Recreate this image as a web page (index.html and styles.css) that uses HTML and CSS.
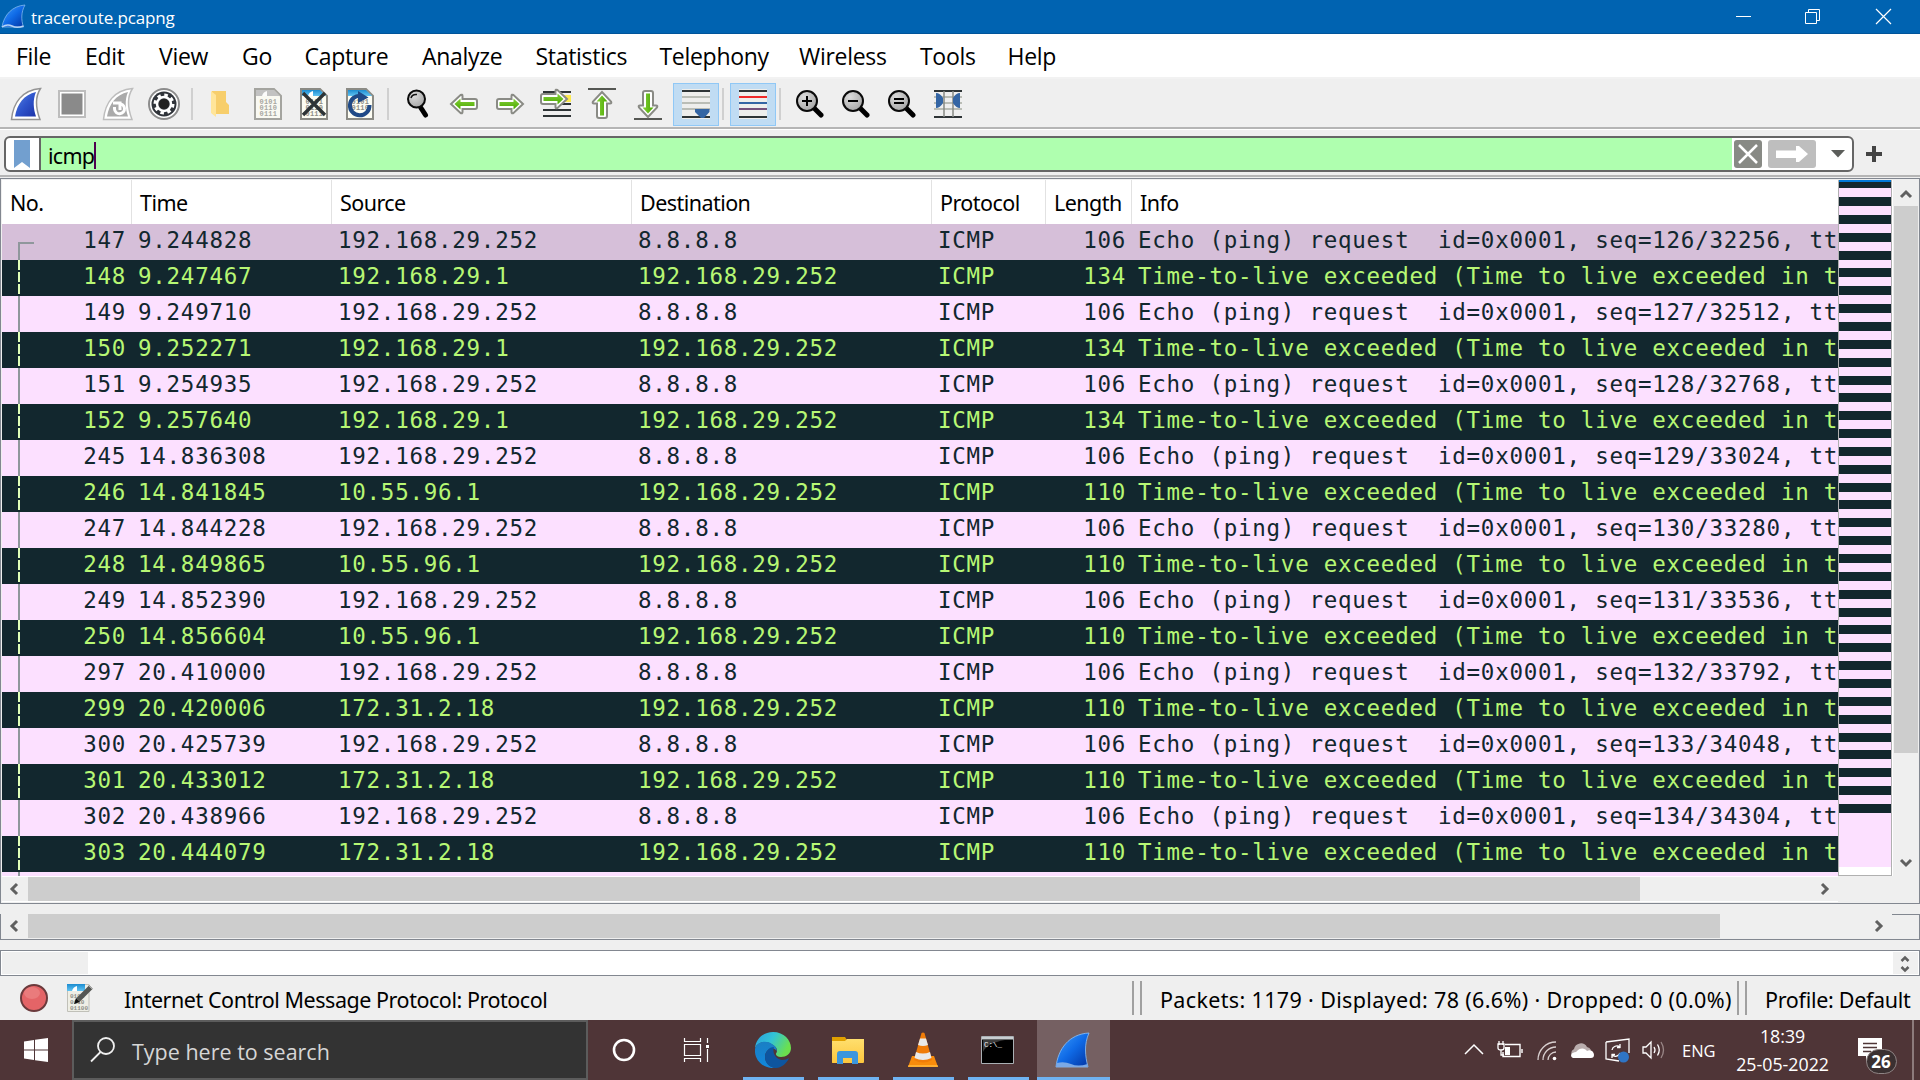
FILE: index.html
```html
<!DOCTYPE html>
<html lang="en">
<head>
<meta charset="utf-8">
<title>traceroute.pcapng</title>
<link rel="stylesheet" href="styles.css">
</head>
<body>
<svg class="defs" width="0" height="0">
  <defs>
    <linearGradient id="fin" x1="0" y1="0" x2="1" y2="1"><stop offset="0" stop-color="#5b86e0"/><stop offset=".5" stop-color="#2f55cc"/><stop offset="1" stop-color="#1d33a8"/></linearGradient>
    <linearGradient id="finBright" x1="0" y1="0" x2="1" y2="1"><stop offset="0" stop-color="#3fa0ff"/><stop offset=".5" stop-color="#0f6ae6"/><stop offset="1" stop-color="#0232a0"/></linearGradient>
    <linearGradient id="green" x1="0" y1="0" x2="0" y2="1"><stop offset="0" stop-color="#85d13a"/><stop offset="1" stop-color="#4ba800"/></linearGradient>
    <linearGradient id="sky" x1="0" y1="0" x2="0" y2="1"><stop offset="0" stop-color="#1c8cd0"/><stop offset="1" stop-color="#62c4f2"/></linearGradient>
    <radialGradient id="lens" cx=".35" cy=".3" r=".8"><stop offset="0" stop-color="#dcdcdc"/><stop offset="1" stop-color="#a2a2a2"/></radialGradient>
    <linearGradient id="edgeTop" x1="0" y1="0" x2="1" y2=".4"><stop offset="0" stop-color="#2a9fdf"/><stop offset=".5" stop-color="#32c3d6"/><stop offset="1" stop-color="#6be04e"/></linearGradient>
    <linearGradient id="edgeLeft" x1="0" y1="0" x2="0" y2="1"><stop offset="0" stop-color="#1a7fc4"/><stop offset="1" stop-color="#1187dc"/></linearGradient>
    <linearGradient id="folder" x1="0" y1="0" x2="0" y2="1"><stop offset="0" stop-color="#ffdf6e"/><stop offset="1" stop-color="#fdc63d"/></linearGradient>
    <symbol id="page" viewBox="0 0 28 32"><path d="M1 1H20L27 8V31H1Z" fill="#fdfdf3" stroke="#8b8b85" stroke-width="2"/></symbol>
    <symbol id="glass" viewBox="0 0 28 30"><path d="M17 18L25 26" stroke="#000" stroke-width="5" stroke-linecap="round"/><circle cx="11" cy="12" r="10" fill="url(#lens)" stroke="#0a0a0a" stroke-width="2"/></symbol>
    <symbol id="arrow" viewBox="0 0 30 22"><path d="M2 11L11.500 2Q13.500 1 13.500 3V6H26Q28 6 28 8V14Q28 16 26 16H13.500V19Q13.500 21 11.500 20Z" fill="#fff" stroke="#8a8b85" stroke-width="2"/><path d="M5.500 11L11.500 5.500V9H25.500V13H11.500V16.500Z" fill="url(#green)"/></symbol>
  </defs>
</svg>

<header class="titlebar">
  <svg class="app-icon" width="25" height="25" viewBox="0 0 25 25"><path d="M1 23C3 11 11 2 24 1C20 8 20 16 22.500 23Z" fill="url(#finBright)" stroke="#7fb7ef" stroke-width=".8"/><path d="M1 23Q6 19.500 11 22T22.500 22" fill="none" stroke="#b5d2f5" stroke-width="1.500"/></svg>
  <span class="window-title">traceroute.pcapng</span>
  <div class="window-buttons">
    <svg width="70" height="33" viewBox="0 0 70 33"><path d="M35 16.500H50" stroke="#fff"/></svg>
    <svg width="70" height="33" viewBox="0 0 70 33"><path d="M34.500 12.500H45.500V23.500H34.500ZM37.500 12V9.500H48.500V20.500H46" fill="none" stroke="#fff"/></svg>
    <svg width="71" height="33" viewBox="0 0 71 33"><path d="M35 9L50 24M50 9L35 24" stroke="#fff" stroke-width="1.200"/></svg>
  </div>
</header>

<nav class="menubar">
  <span>File</span><span>Edit</span><span>View</span><span>Go</span><span>Capture</span><span>Analyze</span><span>Statistics</span><span>Telephony</span><span>Wireless</span><span>Tools</span><span>Help</span>
</nav>

<div class="toolbar">
  <div class="tool"><svg width="32" height="34" viewBox="0 0 32 34"><path d="M1.500 32.500C3 16 12 3 30.500 1.500C25 10 26 22 30 32.500Z" fill="#fff" stroke="#949494" stroke-width="1.500"/><path d="M5 29.500C7 17 14 7.500 26 5C22.500 13 23.500 22 26 29.500Z" fill="url(#fin)"/></svg></div>
  <div class="tool"><svg width="28" height="28" viewBox="0 0 28 28"><path d="M1 1H27V27H1Z" fill="#fff" stroke="#bdbdbd" stroke-width="2"/><path d="M3.500 3.500H24.500V24.500H3.500Z" fill="#8a8a8a"/></svg></div>
  <div class="tool"><svg width="32" height="34" viewBox="0 0 32 34"><path d="M1.500 32.500C3 16 12 3 30.500 1.500C25 10 26 22 30 32.500Z" fill="#fff" stroke="#bdbdbd" stroke-width="1.500"/><path d="M5 29.500C7 17 14 7.500 26 5C22.500 13 23.500 22 26 29.500Z" fill="#aaa"/><path d="M12.500 20V22A5 5 0 1 0 17 16.800M11 16H18V23" fill="none" stroke="#fff" stroke-width="3"/></svg></div>
  <div class="tool"><svg width="32" height="32" viewBox="0 0 32 32"><circle cx="16" cy="16" r="15" fill="#fff" stroke="#8c8c8c" stroke-width="2"/><circle cx="16" cy="16" r="12.500" fill="#30343a"/><circle cx="16" cy="16" r="7" fill="#30343a" stroke="#fff" stroke-width="2.500"/><circle cx="16" cy="16" r="9" fill="none" stroke="#fff" stroke-width="3" stroke-dasharray="3.500 3.570"/><circle cx="16" cy="16" r="5" fill="#222"/></svg></div>
  <i class="sep"></i>
  <div class="tool folder"><svg width="20" height="28" viewBox="0 0 20 28"><path d="M2 1H16V12L19 15V24H2Z" fill="#f7ce6b"/><path d="M1 1L6 5V27L1 23Z" fill="#ffe59a"/></svg></div>
  <div class="tool faded"><svg width="28" height="32" viewBox="0 0 28 32"><use href="#page"/><path d="M2 2H20L26 8H2Z" fill="#b4b4b4"/><path d="M8 8Q9 4 13 3V8Z" fill="#fff"/><text x="5.500" y="16">0101</text><text x="5.500" y="22">0110</text><text x="5.500" y="28">0111</text></svg></div>
  <div class="tool"><svg width="28" height="32" viewBox="0 0 28 32"><use href="#page"/><path d="M2 2H20L26 8H2Z" fill="url(#sky)"/><path d="M8 8Q9 4 13 3V8Z" fill="#fff"/><text x="5.500" y="16">0101</text><text x="5.500" y="22">0110</text><text x="5.500" y="28">0111</text><path d="M3 5L25 27M25 5L3 27" stroke="#2e3436" stroke-width="3.400"/></svg></div>
  <div class="tool"><svg width="28" height="32" viewBox="0 0 28 32"><use href="#page"/><path d="M2 2H20L26 8H2Z" fill="url(#sky)"/><text x="5.500" y="16">0101</text><text x="5.500" y="22">0110</text><path d="M23.500 17A9.800 9.800 0 1 1 15 7.800" fill="none" stroke="#204a87" stroke-width="4"/><path d="M12 3L22.500 9.500L12 15Z" fill="#204a87"/></svg></div>
  <i class="sep"></i>
  <div class="tool"><svg width="22" height="30" viewBox="0 0 22 30"><path d="M14 19L18.500 26" stroke="#000" stroke-width="5" stroke-linecap="round"/><circle cx="9.500" cy="10" r="8.500" fill="url(#lens)" stroke="#0a0a0a" stroke-width="2"/><path d="M4 9Q5 5 10 5.500" fill="none" stroke="#111" stroke-width="1.500"/></svg></div>
  <div class="tool"><svg width="30" height="22"><use href="#arrow"/></svg></div>
  <div class="tool"><svg width="30" height="22" viewBox="0 0 30 22"><use href="#arrow" width="30" height="22" transform="matrix(-1 0 0 1 30 0)"/></svg></div>
  <div class="tool"><svg width="34" height="32" viewBox="0 0 34 32"><path d="M4 4H32M4 16H32M4 22H32M4 28H32" stroke="#2e3436" stroke-width="2"/><path d="M25 7H32V14H23Z" fill="#fce94f"/><use href="#arrow" width="30" height="22" transform="matrix(-1 0 0 1 30 0)"/></svg></div>
  <div class="tool"><svg width="30" height="34" viewBox="0 0 30 34"><path d="M1 2H29" stroke="#555753" stroke-width="2"/><use href="#arrow" width="30" height="22" transform="matrix(0 1 1 0 4 3)"/></svg></div>
  <div class="tool"><svg width="30" height="34" viewBox="0 0 30 34"><path d="M1 32H29" stroke="#555753" stroke-width="2"/><use href="#arrow" width="30" height="22" transform="matrix(0 -1 1 0 4 32)"/></svg></div>
  <div class="tool checked"><svg width="28" height="30" viewBox="0 0 28 30"><path d="M0 0H28V30H0Z" fill="#eeeeec"/><path d="M0 2H28M0 28H28" stroke="#2e3436" stroke-width="2"/><path d="M0 8H28M0 14H28M0 20H28" stroke="#babdb6" stroke-width="2"/><path d="M13 20H27.500V23L22 29H19L13 23Z" fill="#3465a4"/></svg></div>
  <i class="sep narrow"></i>
  <div class="tool checked"><svg width="28" height="30" viewBox="0 0 28 30"><path d="M0 0H28V30H0Z" fill="#eeeeec"/><path d="M0 2H28M0 28H28" stroke="#2e3436" stroke-width="2"/><path d="M0 8H28" stroke="#ef2929" stroke-width="2"/><path d="M0 14H28" stroke="#3465a4" stroke-width="2"/><path d="M0 20H28" stroke="#75507b" stroke-width="2"/></svg></div>
  <i class="sep last"></i>
  <div class="tool"><svg width="28" height="30" viewBox="0 0 28 30"><use href="#glass"/><path d="M6 12H16M11 7V17" stroke="#000" stroke-width="2"/></svg></div>
  <div class="tool"><svg width="28" height="30" viewBox="0 0 28 30"><use href="#glass"/><path d="M6 12H16" stroke="#000" stroke-width="2"/></svg></div>
  <div class="tool"><svg width="28" height="30" viewBox="0 0 28 30"><use href="#glass"/><path d="M6 10H16M6 14H16" stroke="#000" stroke-width="2"/></svg></div>
  <div class="tool"><svg width="28" height="30" viewBox="0 0 28 30"><path d="M0 2H28M0 28H28" stroke="#2e3436" stroke-width="2"/><path d="M0 8H28M0 14H28M0 20H28" stroke="#babdb6" stroke-width="2"/><path d="M10 2V28M19 2V28" stroke="#888a85" stroke-width="1.500"/><path d="M2 4Q6 4 9 9V14Q6 19 2 19ZM26 4Q22 4 19 9V14Q22 19 26 19Z" fill="#3465a4"/></svg></div>
</div>

<div class="filterbar">
  <div class="filter">
    <div class="bookmark"><svg width="16" height="28" viewBox="0 0 16 28"><path d="M0 0H16V28L8 22L0 28Z" fill="#729fcf"/></svg></div>
    <div class="filter-input"><span>icmp</span><i class="caret"></i></div>
    <div class="filter-actions">
      <svg width="28" height="28" viewBox="0 0 28 28"><rect width="28" height="28" rx="3" fill="#888a85"/><path d="M5 5L23 23M23 5L5 23" stroke="#fff" stroke-width="2.500"/></svg>
      <svg width="48" height="28" viewBox="0 0 48 28"><rect width="48" height="28" rx="3" fill="#bebebe"/><path d="M8 10.500H28V6H31L40 14L31 22H28V18H8Z" fill="#fff"/></svg>
      <svg class="drop" width="14" height="8" viewBox="0 0 14 8"><path d="M0 0H14L7 7.500Z" fill="#5b5d5a"/></svg>
    </div>
  </div>
  <svg class="plus" width="16" height="16" viewBox="0 0 16 16"><path d="M0 8H16M8 0V16" stroke="#444" stroke-width="4"/></svg>
</div>

<main class="packets">
  <section class="list">
    <div class="head"><span>No.</span><span>Time</span><span>Source</span><span>Destination</span><span>Protocol</span><span>Length</span><span>Info</span></div>
    <div class="rows">
      <div class="row req first"><b>147</b><span>9.244828</span><span>192.168.29.252</span><span>8.8.8.8</span><span>ICMP</span><b>106</b><span>Echo (ping) request  id=0x0001, seq=126/32256, tt</span></div>
      <div class="row ttl"><b>148</b><span>9.247467</span><span>192.168.29.1</span><span>192.168.29.252</span><span>ICMP</span><b>134</b><span>Time-to-live exceeded (Time to live exceeded in t</span></div>
      <div class="row req"><b>149</b><span>9.249710</span><span>192.168.29.252</span><span>8.8.8.8</span><span>ICMP</span><b>106</b><span>Echo (ping) request  id=0x0001, seq=127/32512, tt</span></div>
      <div class="row ttl"><b>150</b><span>9.252271</span><span>192.168.29.1</span><span>192.168.29.252</span><span>ICMP</span><b>134</b><span>Time-to-live exceeded (Time to live exceeded in t</span></div>
      <div class="row req"><b>151</b><span>9.254935</span><span>192.168.29.252</span><span>8.8.8.8</span><span>ICMP</span><b>106</b><span>Echo (ping) request  id=0x0001, seq=128/32768, tt</span></div>
      <div class="row ttl"><b>152</b><span>9.257640</span><span>192.168.29.1</span><span>192.168.29.252</span><span>ICMP</span><b>134</b><span>Time-to-live exceeded (Time to live exceeded in t</span></div>
      <div class="row req"><b>245</b><span>14.836308</span><span>192.168.29.252</span><span>8.8.8.8</span><span>ICMP</span><b>106</b><span>Echo (ping) request  id=0x0001, seq=129/33024, tt</span></div>
      <div class="row ttl"><b>246</b><span>14.841845</span><span>10.55.96.1</span><span>192.168.29.252</span><span>ICMP</span><b>110</b><span>Time-to-live exceeded (Time to live exceeded in t</span></div>
      <div class="row req"><b>247</b><span>14.844228</span><span>192.168.29.252</span><span>8.8.8.8</span><span>ICMP</span><b>106</b><span>Echo (ping) request  id=0x0001, seq=130/33280, tt</span></div>
      <div class="row ttl"><b>248</b><span>14.849865</span><span>10.55.96.1</span><span>192.168.29.252</span><span>ICMP</span><b>110</b><span>Time-to-live exceeded (Time to live exceeded in t</span></div>
      <div class="row req"><b>249</b><span>14.852390</span><span>192.168.29.252</span><span>8.8.8.8</span><span>ICMP</span><b>106</b><span>Echo (ping) request  id=0x0001, seq=131/33536, tt</span></div>
      <div class="row ttl"><b>250</b><span>14.856604</span><span>10.55.96.1</span><span>192.168.29.252</span><span>ICMP</span><b>110</b><span>Time-to-live exceeded (Time to live exceeded in t</span></div>
      <div class="row req"><b>297</b><span>20.410000</span><span>192.168.29.252</span><span>8.8.8.8</span><span>ICMP</span><b>106</b><span>Echo (ping) request  id=0x0001, seq=132/33792, tt</span></div>
      <div class="row ttl"><b>299</b><span>20.420006</span><span>172.31.2.18</span><span>192.168.29.252</span><span>ICMP</span><b>110</b><span>Time-to-live exceeded (Time to live exceeded in t</span></div>
      <div class="row req"><b>300</b><span>20.425739</span><span>192.168.29.252</span><span>8.8.8.8</span><span>ICMP</span><b>106</b><span>Echo (ping) request  id=0x0001, seq=133/34048, tt</span></div>
      <div class="row ttl"><b>301</b><span>20.433012</span><span>172.31.2.18</span><span>192.168.29.252</span><span>ICMP</span><b>110</b><span>Time-to-live exceeded (Time to live exceeded in t</span></div>
      <div class="row req"><b>302</b><span>20.438966</span><span>192.168.29.252</span><span>8.8.8.8</span><span>ICMP</span><b>106</b><span>Echo (ping) request  id=0x0001, seq=134/34304, tt</span></div>
      <div class="row ttl"><b>303</b><span>20.444079</span><span>172.31.2.18</span><span>192.168.29.252</span><span>ICMP</span><b>110</b><span>Time-to-live exceeded (Time to live exceeded in t</span></div>
      <div class="row req"></div>
    </div>
  </section>
  <svg class="minimap" width="55" height="696" viewBox="0 0 55 696" shape-rendering="crispEdges"><path d="M0 0H55V696H0Z" fill="#b0b0b0"/><path d="M1 0H53V695H1Z" fill="#fff"/><path d="M1 0H53V687H1Z" fill="#fce0ff"/><path d="M1 2H53V8H1Z" fill="#12272e"/><path d="M27 17V633" stroke="#12272e" stroke-width="52" stroke-dasharray="9 8.850"/><path d="M1 0H53V2H1Z" fill="#0078d7"/><path d="M54 0H55V696H54Z" fill="#fff"/></svg>
  <div class="vscroll">
    <svg width="24" height="26" viewBox="0 0 24 26"><path d="M7 17L12 12L17 17" fill="none" stroke="#606060" stroke-width="3"/></svg>
    <i></i>
    <svg width="24" height="26" viewBox="0 0 24 26"><path d="M7 10L12 15L17 10" fill="none" stroke="#606060" stroke-width="3"/></svg>
  </div>
  <div class="hscroll">
    <svg width="26" height="24" viewBox="0 0 26 24"><path d="M15 7L10 12L15 17" fill="none" stroke="#606060" stroke-width="3"/></svg>
    <i class="thumb-list"></i>
    <svg width="26" height="24" viewBox="0 0 26 24"><path d="M10 7L15 12L10 17" fill="none" stroke="#606060" stroke-width="3"/></svg>
  </div>
</main>

<section class="details">
  <div class="hscroll">
    <svg width="26" height="24" viewBox="0 0 26 24"><path d="M15 7L10 12L15 17" fill="none" stroke="#606060" stroke-width="3"/></svg>
    <i class="thumb-details"></i>
    <svg width="26" height="24" viewBox="0 0 26 24"><path d="M10 7L15 12L10 17" fill="none" stroke="#606060" stroke-width="3"/></svg>
  </div>
  <i class="corner"></i>
</section>

<section class="bytes">
  <i class="offset"></i>
  <div class="spin">
    <svg width="25" height="11" viewBox="0 0 25 11"><path d="M8.500 9L12 5.500L15.500 9" fill="none" stroke="#606060" stroke-width="2.500"/></svg>
    <svg width="25" height="11" viewBox="0 0 25 11"><path d="M8.500 4L12 7.500L15.500 4" fill="none" stroke="#606060" stroke-width="2.500"/></svg>
  </div>
</section>

<footer class="statusbar">
  <svg width="28" height="28" viewBox="0 0 28 28"><circle cx="14" cy="14" r="13" fill="#e46467" stroke="#6b3a3c" stroke-width="2"/><ellipse cx="12" cy="9" rx="8" ry="6" fill="#ee8a8b" opacity=".6"/></svg>
  <svg class="note" width="28" height="28" viewBox="0 0 28 28"><path d="M.5 .5H22V27.500H.5Z" fill="#eeeee6" stroke="#c0c0b8"/><path d="M0 0H18V7H0Z" fill="url(#sky)"/><path d="M5 7Q6 3 10 2V7Z" fill="#fff"/><text x="3" y="14">0101</text><text x="3" y="20">0110</text><text x="3" y="26">01100</text><path d="M24 3L11 16" stroke="#555753" stroke-width="5"/><path d="M9 14L13 18L7 20Z" fill="#111"/><path d="M22 2L25 5" stroke="#aaa" stroke-width="1"/></svg>
  <span class="field">Internet Control Message Protocol: Protocol</span>
  <i class="grip"></i>
  <span class="counts">Packets: 1179 · Displayed: 78 (6.6%) · Dropped: 0 (0.0%)</span>
  <i class="grip"></i>
  <span class="profile">Profile: Default</span>
</footer>

<div class="taskbar">
  <div class="start"><svg width="24" height="24" viewBox="0 0 24 24"><path d="M0 3.500L10 2V11.500H0ZM11 1.800L24 0V11.500H11ZM0 12.500H10V22L0 20.500ZM11 12.500H24V24L11 22.200Z" fill="#fff"/></svg></div>
  <div class="search"><svg width="26" height="26" viewBox="0 0 26 26"><circle cx="16" cy="9" r="8" fill="none" stroke="#f0f0f0" stroke-width="1.800"/><path d="M10.500 15L1 24.500" stroke="#f0f0f0" stroke-width="1.800"/></svg><span>Type here to search</span></div>
  <div class="pin cortana"><svg width="26" height="26" viewBox="0 0 26 26"><circle cx="13" cy="13" r="10" fill="none" stroke="#fff" stroke-width="2.600"/></svg></div>
  <div class="pin view"><svg width="26" height="26" viewBox="0 0 26 26"><path d="M1.500 1V4.500H17.500V1M1.500 25V21.500H17.500V25M1.500 7.500H17.500V18.500H1.500ZM24.500 1V6M24.500 12V25" fill="none" stroke="#fff" stroke-width="1.200"/><path d="M23 8H26V11H23Z" fill="#fff"/></svg></div>
  <div class="pin open"><svg width="36" height="36" viewBox="0 0 36 36"><path d="M0 16C1 6 9 0 18 0C29 0 36 8 36 16C36 22 31 25 26 25C22 25 20.500 23 21 21.500C23 19 22 15 18 13C12 8 3 9 0 16Z" fill="url(#edgeTop)"/><path d="M0 17C2 9 12 8 17 12C21 14 22 17 21.500 19C18 13 10 18 10 25C10 31 15 35 20 36C8 37 -1 28 0 17Z" fill="url(#edgeLeft)"/><path d="M10 25C10 20 14 15 19 15C17 20 20 27 27 28C30 28 32 27 34 26C31 33 24 37 19 35.800C14 35 10 31 10 25Z" fill="#0e559f"/></svg></div>
  <div class="pin open"><svg width="32" height="28" viewBox="0 0 32 28"><path d="M0 1H13L15 4H31V27H0Z" fill="#e0a000"/><path d="M0 5H13L15 3H32V26Q32 27 31 27H1Q0 27 0 26Z" fill="url(#folder)"/><path d="M5 28V18Q5 15 8 15H23Q26 15 26 18V28H20V22H11V28Z" fill="#3b96dd"/></svg></div>
  <div class="pin open"><svg width="30" height="36" viewBox="0 0 30 36"><path d="M4 24H26L30 35H0Z" fill="#f88b0b"/><path d="M13.500 1Q15 0 16.500 1L24 28Q15 33 6 28Z" fill="#f07c08"/><path d="M12 6.500H18L20 13Q15 15 10 13ZM8 20Q15 23 22 20L23.500 26Q15 30 6.500 26Z" fill="#e9e9e9"/><path d="M0 35L.5 33H29.500L30 35Z" fill="#ffae30"/></svg></div>
  <div class="pin open"><svg width="33" height="28" viewBox="0 0 33 28"><path d="M.5 .5H32.500V27.500H.5Z" fill="#000" stroke="#aab0b4"/><path d="M1 1H32V3.500H1Z" fill="#c9ced1"/><path d="M2 4H24Q6 7 2 16Z" fill="#3c3c3c"/><text class="prompt" x="3" y="11">C:\_</text></svg></div>
  <div class="pin open active"><svg width="36" height="36" viewBox="0 0 36 36"><path d="M1 35C3 17 14 2 34 1C29 12 30 24 33 35Z" fill="url(#finBright)" stroke="#8fc1f5" stroke-width=".8"/><path d="M1 35L2 31Q9 29 16 32T32.500 32V35Z" fill="#7ba9e6"/></svg></div>
  <div class="tray">
    <svg class="chev" width="20" height="14" viewBox="0 0 20 14"><path d="M1 12L10 3L19 12" fill="none" stroke="#fff" stroke-width="1.500"/></svg>
    <svg class="batt" width="26" height="20" viewBox="0 0 26 20"><path d="M8 4.500H23V16.500H6V12M25 9V13" fill="none" stroke="#fff" stroke-width="1.400"/><path d="M8 7H13V15H8Z" fill="#fff"/><path d="M2 1V5M6 1V5M1 4H7V8Q7 10 4 10T1 8ZM4 10V15H7" fill="none" stroke="#fff" stroke-width="1.300"/></svg>
    <svg class="wifi" width="20" height="20" viewBox="0 0 20 20"><path d="M1 19A18 18 0 0 1 19 1M6 19A13 13 0 0 1 19 6M11 19A8 8 0 0 1 19 11" fill="none" stroke="#d8cfcf" stroke-width="1.300"/><circle cx="17.500" cy="17.500" r="1.800" fill="#fff"/></svg>
    <svg class="cloud" width="25" height="17" viewBox="0 0 25 17"><path d="M5 7A7 7 0 0 1 18 5A6 6 0 0 1 22 8Q14 14 5 16A5 5 0 0 1 5 7Z" fill="#b9adad"/><path d="M4 16C0 14 3 10 7 10C11 5 16 6 18 9C22 7 25 10 25 13Q25 16 22 16Z" fill="#fff"/></svg>
    <svg class="upd" width="25" height="25" viewBox="0 0 25 25"><path d="M1 4L24 1V15M1 4V21L14 23" fill="none" stroke="#fff" stroke-width="1.300"/><path d="M7 12A5 5 0 0 1 15 9V6M15 9.500H12M15 15A5 5 0 0 1 7 17V20M7 16.500H10" fill="none" stroke="#fff" stroke-width="1.300"/><circle cx="18.500" cy="19" r="5.500" fill="#2f75c5"/></svg>
    <svg class="vol" width="24" height="20" viewBox="0 0 24 20"><path d="M1 7H4L9 2V18L4 13H1Z" fill="none" stroke="#fff" stroke-width="1.300"/><path d="M12 7Q14 10 12 13M15.500 4.500Q19 10 15.500 15.500" fill="none" stroke="#fff" stroke-width="1.300"/><path d="M19 2Q24 10 19 18" fill="none" stroke="#9a8787" stroke-width="1.300"/></svg>
    <span class="lang">ENG</span>
    <div class="clock"><span>18:39</span><span>25-05-2022</span></div>
    <div class="notify"><svg width="25" height="25" viewBox="0 0 25 25"><path d="M0 0H24V18H15L8 24V18H0Z" fill="#fff"/><path d="M5 5.500H19M5 9.500H19M5 13.500H13" stroke="#4f3738" stroke-width="1.300"/></svg><span class="badge">26</span></div>
  </div>
</div>
</body>
</html>
```
FILE: styles.css
```css
* { box-sizing: border-box; }

body {
  margin: 0;
  width: 1920px;
  height: 1080px;
  overflow: hidden;
  display: flex;
  flex-direction: column;
  background: #efefef;
  color: #000;
  font: 21.5px "Noto Sans", "Liberation Sans", sans-serif;
}
svg { display: block; flex: none; }
i, b { font-style: normal; font-weight: 400; }
.defs { width: 0; height: 0; }

/* Title bar and menus */
.titlebar {
  height: 34px;
  flex: none;
  display: flex;
  align-items: center;
  background: #0063b1;
  border-bottom: 1px solid #00549a;
  color: #fff;
  font: 17px "Open Sans", sans-serif;
}
.app-icon { margin-left: 1px; }
.window-title { margin-left: 5px; padding-top: 2px; letter-spacing: -.13px; }
.window-buttons { display: flex; margin-left: auto; padding-right: 8px; }
.menubar {
  height: 45px;
  flex: none;
  display: grid;
  grid-template-columns: 69px 74px 83px 62.5px 117.500px 113.500px 124px 139.500px 121px 87.500px 80px;
  padding-left: 16px;
  line-height: 45px;
  background: #fff;
  border-bottom: 2px solid #f2f2f2;
  font-family: "Open Sans", sans-serif;
  font-size: 23px;
  letter-spacing: -.3px;
}

/* Toolbar */
.toolbar {
  height: 50px;
  flex: none;
  display: flex;
  align-items: center;
  padding: 2px 0 0 3px;
  border-bottom: 2px solid #b5b5b5;
}
.toolbar text, .note text { font: 700 7px "Liberation Mono", monospace; fill: #8f8f88; }
.toolbar text { letter-spacing: .2px; }
.note text { font-size: 6px; }
.tool { width: 46px; height: 43px; display: grid; place-items: center; flex: none; }
.folder { padding-right: 5px; }
.faded { opacity: .75; }
.tool.checked { background: #c0dcf3; border: 1px solid #90c8f6; }
.tool.checked:has(+ .narrow) { margin-left: 2px; }
.sep { width: 12px; height: 32px; border-left: 2px solid #d0d0d0; margin-left: 4px; margin-right: -4px; }
.sep.narrow { width: 11px; margin-left: 3px; margin-right: -3px; }
.sep.last { width: 11px; margin-left: 3px; margin-right: -3px; }

/* Display filter */
.filterbar {
  height: 48px;
  flex: none;
  display: flex;
  align-items: center;
  padding: 3px 38px 0 4px;
  border-top: 1px solid #fff;
  border-bottom: 2px solid #b5b5b5;
}
.filter {
  flex: 1;
  height: 36px;
  margin-right: 12px;
  display: flex;
  border: 2px solid #666;
  border-radius: 6px;
  background: #fff;
  overflow: hidden;
}
.bookmark { width: 35px; border-right: 2px solid #666; padding: 2px 0 0 8px; }
.filter-input {
  flex: 1;
  display: flex;
  align-items: center;
  padding: 2px 0 0 7px;
  background: #afffaf;
  letter-spacing: -.7px;
}
.caret { width: 2px; height: 27px; background: #500050; }
.filter-actions { width: 120px; display: flex; align-items: center; padding-left: 2px; gap: 6px; }
.drop { margin-left: 9px; }

/* Packet list pane */
.packets {
  height: 726px;
  flex: none;
  display: grid;
  grid-template: 696px 27px / 1836px 55px 25px;
  margin-top: 1px;
  padding: 1px 0 0 1px;
  border: 1px solid #828790;
}
.list { overflow: hidden; background: #fff; height: 696px; }
.head, .row {
  display: grid;
  grid-template-columns: 130px 200px 300px 300px 114px 86px 706px;
}
.head { height: 44px; line-height: 46px; letter-spacing: -.55px; }
.head span { height: 44px; padding-left: 8px; border-right: 1px solid #e2e2e2; }
.head span:last-child { border: 0; }
.row {
  height: 36px;
  line-height: 33px;
  font-family: "DejaVu Sans Mono", monospace;
  font-size: 22.5px;
  letter-spacing: .74px;
  white-space: pre;
}
.row span { padding-left: 6px; }
.row b { text-align: right; padding-right: 6px; }
.req { color: #12272e; background: linear-gradient(#8f979c, #8f979c) 16px 0 / 2px 100% no-repeat #fce0ff; }
.req.first {
  background:
    linear-gradient(#8f979c, #8f979c) 16px 18px / 16px 2px no-repeat,
    linear-gradient(#8f979c, #8f979c) 16px 18px / 2px 18px no-repeat #d6bfd9;
}
.ttl {
  color: #b7f774;
  background: repeating-linear-gradient(#e0ffb8 0 10px, #12272e 10px 12px) 16px 0 / 2px 100% no-repeat #12272e;
}

/* Scroll bars */
.vscroll { display: flex; flex-direction: column; align-items: center; height: 696px; }
.vscroll i { width: 24px; height: 547px; background: #cdcdcd; }
.vscroll svg:last-child { margin-top: auto; }
.packets > .hscroll { width: 1836px; height: 26px; border: 1px solid #fff; border-width: 1px 0; }
.hscroll { height: 24px; display: flex; align-items: center; }
.hscroll i { height: 24px; background: #cdcdcd; }
.hscroll svg:last-child { margin-left: auto; }
.thumb-list { width: 1612px; }
.thumb-details { width: 1692px; }

.details {
  height: 26px;
  flex: none;
  margin-top: 10px;
  display: flex;
  padding-left: 1px;
  border: 1px solid #828790;
  border-top: 0;
}
.details .hscroll { width: 1890px; }
.corner { flex: 1; height: 25px; border-top: 1px solid #828790; }

.bytes {
  height: 26px;
  flex: none;
  margin-top: 10px;
  display: flex;
  justify-content: space-between;
  padding: 1px;
  border: 1px solid #828790;
  background: #fff;
}
.offset { width: 86px; background: #efefef; }
.spin { display: flex; flex-direction: column; justify-content: space-between; }
.spin svg { background: #f0f0f0; }

/* Status bar */
.statusbar {
  flex: 1;
  display: flex;
  align-items: center;
  padding-left: 20px;
  white-space: nowrap;
}
.statusbar span { padding-top: 3px; }
.note { margin-left: 19px; }
.field { width: 1008px; margin-left: 29px; letter-spacing: -.46px; }
.grip { width: 10px; height: 34px; border: 2px solid #a0a0a0; border-width: 0 2px; }
.counts { width: 577px; margin-left: 18px; letter-spacing: .35px; }
.profile { margin-left: 18px; letter-spacing: -.3px; }

/* Taskbar */
.taskbar {
  height: 60px;
  flex: none;
  display: flex;
  background: #4f3537;
  color: #fff;
  font-family: "Open Sans", sans-serif;
}
.start { width: 72px; padding: 18px 0 0 24px; }
.search {
  width: 516px;
  display: flex;
  align-items: center;
  padding-left: 16px;
  border: 2px solid #5c5c5c;
  background: #333;
  color: #d6d6d6;
  font-size: 21.5px;
}
.search span { margin: 2px 0 0 16px; }
.prompt { font: 7.5px "Liberation Mono", monospace; fill: #eee; }
.pin { display: grid; place-items: center; width: 61px; margin-right: 14px; }
.cortana { width: 72px; margin: 0; }
.view { width: 72px; margin: 0 11px 0 0; }
.open { border-bottom: 3px solid #6fb3f2; padding: 2px 2px 0 0; }
.active { width: 73px; margin-left: -6px; background: #756062; }
.tray { flex: 1; display: flex; align-items: center; border-right: 2px solid #8d7b7c; margin: 0 6px 0 0; }
.chev { margin: 0 0 2px 340px; }
.batt { margin-left: 13px; }
.wifi { margin: 2px 0 0 14px; }
.cloud { margin: 0 0 0 12px; }
.upd { margin-left: 11px; }
.vol { margin-left: 12px; }
.lang { margin-left: 16px; font-size: 16.500px; }
.clock {
  width: 100px;
  margin-left: 17px;
  display: flex;
  flex-direction: column;
  align-items: center;
  line-height: 28px;
  font-size: 17.800px;
}
.notify { position: relative; margin-left: 25px; }
.badge {
  position: absolute;
  left: 8px;
  top: 11px;
  width: 31px;
  height: 25px;
  border: 1.500px solid #8f8484;
  border-radius: 13px;
  background: #3a3031;
  text-align: center;
  font: 700 17px/23px "Open Sans", sans-serif;
}
```
